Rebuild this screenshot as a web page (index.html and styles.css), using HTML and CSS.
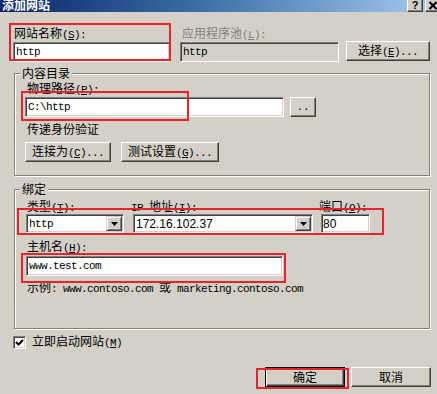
FILE: index.html
```html
<!DOCTYPE html>
<html lang="zh-CN">
<head>
<meta charset="utf-8">
<title>添加网站</title>
<link rel="stylesheet" href="styles.css">
</head>
<body>
<div class="dialog">
  <div class="titlebar">
    <span class="title">添加网站</span>
    <div class="tb-buttons">
      <span class="tb-btn help">?</span>
      <span class="tb-btn close"><svg width="10" height="9" viewBox="0 0 10 9"><path d="M1.5 1 L8.5 8 M8.5 1 L1.5 8" stroke="#000" stroke-width="2" fill="none"/></svg></span>
    </div>
  </div>

  <div class="content">
    <div class="row1">
      <div class="field name-field">
        <span class="lbl">网站名称<span class="ak">(<u>S</u>):</span></span>
        <div class="textbox"><span class="mono">http</span></div>
      </div>
      <div class="field pool-field">
        <span class="lbl disabled">应用程序池<span class="ak">(<u>L</u>):</span></span>
        <div class="textbox readonly"><span class="mono">http</span></div>
      </div>
      <button class="btn select-btn">选择<span class="ak">(<u>E</u>)...</span></button>
    </div>

    <fieldset class="group group-dir">
      <legend>内容目录</legend>
      <span class="lbl indent">物理路径<span class="ak">(<u>P</u>):</span></span>
      <div class="path-row">
        <div class="textbox path-box"><span class="mono">C:\http</span></div>
        <button class="btn browse-btn">..</button>
      </div>
      <span class="lbl indent pass">传递身份验证</span>
      <div class="auth-row">
        <button class="btn connect-btn">连接为<span class="ak">(<u>C</u>)...</span></button>
        <button class="btn test-btn">测试设置<span class="ak">(<u>G</u>)...</span></button>
      </div>
    </fieldset>

    <fieldset class="group group-bind">
      <legend>绑定</legend>
      <div class="bind-row">
        <div class="col col-type">
          <span class="lbl">类型<span class="ak">(<u>T</u>):</span></span>
          <div class="combo">
            <span class="combo-text mono">http</span>
            <span class="drop"><svg width="7" height="4" viewBox="0 0 7 4"><path d="M0 0 H7 L3.5 4 Z" fill="#000"/></svg></span>
          </div>
        </div>
        <div class="col col-ip">
          <span class="lbl"><span class="ak">IP </span>地址<span class="ak">(<u>I</u>):</span></span>
          <div class="combo">
            <span class="combo-text sans">172.16.102.37</span>
            <span class="drop"><svg width="7" height="4" viewBox="0 0 7 4"><path d="M0 0 H7 L3.5 4 Z" fill="#000"/></svg></span>
          </div>
        </div>
        <div class="col col-port">
          <span class="lbl">端口<span class="ak">(<u>O</u>):</span></span>
          <div class="textbox port-box"><span class="sans">80</span></div>
        </div>
      </div>
      <span class="lbl indent host-lbl">主机名<span class="ak">(<u>H</u>):</span></span>
      <div class="textbox host-box"><span class="mono">www.test.com</span></div>
      <div class="example mono"><span class="cjk">示例</span>: www.contoso.com <span class="cjk">或</span> marketing.contoso.com</div>
    </fieldset>

    <div class="check-row">
      <span class="checkbox"><svg width="9" height="9" viewBox="0 0 9 9"><path d="M1 4 L3.5 6.5 L8 2" stroke="#000" stroke-width="2" fill="none"/></svg></span>
      <span class="check-lbl">立即启动网站<span class="ak">(<u>M</u>)</span></span>
    </div>

    <div class="actions">
      <button class="btn default ok-btn">确定</button>
      <button class="btn cancel-btn">取消</button>
    </div>
  </div>

  <div class="mark mark-name"></div>
  <div class="mark mark-path"></div>
  <div class="mark mark-bind"></div>
  <div class="mark mark-host"></div>
  <div class="mark mark-ok"></div>
</div>
</body>
</html>
```

FILE: styles.css
```css
* { box-sizing: border-box; }
html, body { margin: 0; padding: 0; }
body {
  width: 437px;
  height: 394px;
  overflow: hidden;
  background: #d4d0c8;
  color: #000;
  font: 12px/14px "Noto Sans CJK SC", "Noto Sans", sans-serif;
}
u { text-decoration: underline; }

.dialog { position: relative; width: 437px; height: 394px; overflow: hidden; }

/* title bar */
.titlebar {
  height: 12px;
  display: flex;
  justify-content: space-between;
  align-items: flex-start;
  background: linear-gradient(to right, #0a246a 0%, #3a6ea5 45%, #a6caf0 100%);
  overflow: hidden;
}
.title {
  color: #fff;
  font-weight: bold;
  font-size: 12px;
  line-height: 12px;
  margin-top: -1px;
  padding-left: 2px;
}
.tb-buttons { display: flex; gap: 2px; margin-right: -4px; margin-top: -2px; }
.tb-btn {
  width: 16px;
  height: 14px;
  background: #d4d0c8;
  border: 1px solid;
  border-color: #fff #404040 #404040 #fff;
  box-shadow: inset -1px -1px #808080;
  display: flex;
  align-items: center;
  justify-content: center;
  font: bold 11px/11px "Liberation Sans", sans-serif;
}
.tb-btn.close svg { display: block; margin-top: 1px; }

/* common controls */
.lbl { display: block; height: 14px; white-space: nowrap; }
.disabled { color: #808080; }
.ak {
  font-family: "Liberation Mono", monospace;
  font-size: 11px;
  letter-spacing: -0.6px;
}
.mono {
  font-family: "Liberation Mono", "Noto Sans CJK SC", monospace;
  font-size: 11px;
  letter-spacing: -0.6px;
}
.mono .cjk { font-family: "Noto Sans CJK SC", sans-serif; font-size: 12px; letter-spacing: 0; }
.sans { font-family: "Liberation Sans", sans-serif; font-size: 12px; }

.textbox {
  height: 20px;
  background: #fff;
  border: 1px solid;
  border-color: #808080 #fff #fff #808080;
  box-shadow: inset 1px 1px #404040, inset -1px -1px #d4d0c8;
  padding: 1px 1px 1px 2px;
  display: flex;
  align-items: center;
  white-space: nowrap;
  overflow: hidden;
}
.textbox.readonly { background: #d4d0c8; }

.btn {
  height: 20px;
  padding: 0;
  margin: 0;
  background: #d4d0c8;
  border: 1px solid;
  border-color: #fff #404040 #404040 #fff;
  box-shadow: inset -1px -1px #808080;
  font: 12px/14px "Noto Sans CJK SC", "Noto Sans", sans-serif;
  color: #000;
  white-space: nowrap;
}
.btn.default {
  border: 1px solid #000;
  box-shadow: inset 1px 1px #fff, inset -1px -1px #404040, inset -2px -2px #808080;
}

/* row 1 */
.content { padding-top: 14px; }
.row1 { display: flex; align-items: flex-end; margin-left: 13px; }
.name-field { width: 157px; }
.name-field .lbl { padding-left: 1px; }
.pool-field { width: 159px; margin-left: 10px; }
.pool-field .lbl { padding-left: 2px; }
.field .textbox { margin-top: 2px; }
.select-btn { width: 84px; margin-left: 7px; margin-bottom: 1px; }

/* group boxes */
.group {
  margin: 4px 0 0 14px;
  width: 416px;
  min-width: 0;
  padding: 1px 0 13px 5px;
  border: 1px solid #808080;
  box-shadow: inset 1px 1px #fff, 1px 1px #fff;
}
.group legend {
  padding: 0 2px;
  line-height: 14px;
  background: #d4d0c8;
}
.indent { padding-left: 7px; }

.path-row { display: flex; margin: 2px 0 0 5px; }
.path-box { width: 259px; }
.browse-btn { width: 26px; margin-left: 6px; font-family: "Liberation Mono", monospace; font-size: 11px; }
.pass { margin-top: 5px; }
.auth-row { display: flex; margin: 6px 0 0 5px; gap: 10px; }
.connect-btn { width: 86px; }
.test-btn { width: 98px; }

.group-bind { margin-top: 6px; padding: 3px 0 34px 5px; }
.bind-row { display: flex; }
.col-type { width: 98px; margin-left: 6px; }
.col-type .lbl { padding-left: 1px; }
.col-ip { width: 180px; margin-left: 9px; }
.col-port { width: 49px; margin-left: 8px; }
.col-ip .lbl, .col-port .lbl { margin-left: -2px; }
.col .combo, .col .textbox { margin-top: 1px; }

.combo {
  height: 19px;
  background: #fff;
  border: 1px solid;
  border-color: #808080 #fff #fff #808080;
  box-shadow: inset 1px 1px #404040, inset -1px -1px #d4d0c8;
  padding: 1px;
  display: flex;
  align-items: center;
}
.combo-text { flex: 1; padding-left: 1px; white-space: nowrap; overflow: hidden; }
.drop {
  width: 16px;
  height: 15px;
  background: #d4d0c8;
  border: 1px solid;
  border-color: #d4d0c8 #404040 #404040 #d4d0c8;
  box-shadow: inset 1px 1px #fff, inset -1px -1px #808080;
  display: flex;
  align-items: center;
  justify-content: center;
}
.drop svg { display: block; }
.port-box { height: 19px; padding-left: 1px; }

.host-lbl { margin-top: 6px; }
.host-box { width: 257px; margin: 3px 0 0 6px; }
.example { margin-top: 4px; padding-left: 7px; height: 14px; line-height: 14px; white-space: nowrap; }

/* checkbox */
.check-row { display: flex; align-items: center; margin: 6px 0 0 13px; height: 14px; }
.checkbox {
  width: 13px;
  height: 13px;
  background: #fff;
  border: 1px solid;
  border-color: #808080 #fff #fff #808080;
  box-shadow: inset 1px 1px #404040, inset -1px -1px #d4d0c8;
  display: flex;
  align-items: center;
  justify-content: center;
}
.checkbox svg { display: block; }
.check-lbl { margin-left: 6px; white-space: nowrap; }

/* bottom buttons */
.actions { display: flex; justify-content: flex-end; gap: 6px; margin-top: 18px; padding-right: 6px; }
.ok-btn, .cancel-btn { width: 80px; }

/* red annotation rectangles */
.mark { position: absolute; border: 2px solid #e8232b; pointer-events: none; }
.mark-name { left: 9px; top: 23px; width: 162px; height: 38px; }
.mark-path { left: 21px; top: 91px; width: 168px; height: 30px; }
.mark-bind { left: 17px; top: 208px; width: 367px; height: 27px; }
.mark-host { left: 21px; top: 253px; width: 265px; height: 30px; }
.mark-ok { left: 256px; top: 368px; width: 93px; height: 21px; }
```
